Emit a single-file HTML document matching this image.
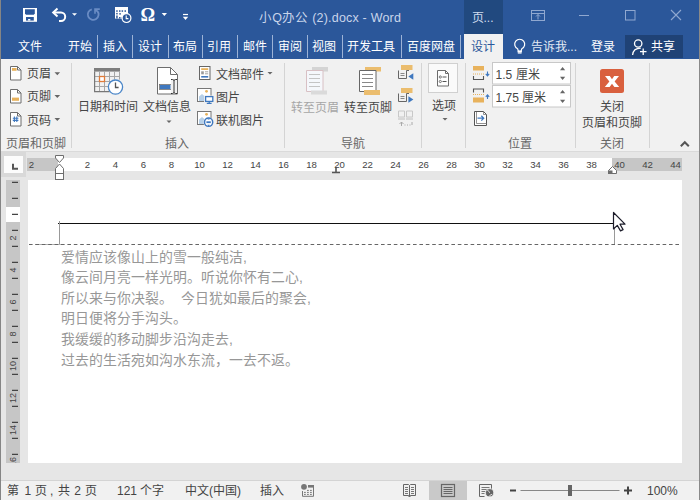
<!DOCTYPE html>
<html lang="zh-CN"><head><meta charset="utf-8">
<style>
*{margin:0;padding:0;box-sizing:border-box}
html,body{width:700px;height:500px;overflow:hidden;background:#e6e6e6}
body{position:relative;font-family:"Liberation Sans",sans-serif;color:#444}
.a{position:absolute}
.t{position:absolute;white-space:nowrap;line-height:1}
svg{position:absolute;overflow:visible}
#title{left:0;top:0;width:700px;height:59px;background:#2b579a}
.tab{position:absolute;top:40px;font-size:12px;color:#fff;line-height:14px;white-space:nowrap}
.sep{position:absolute;top:35px;width:1px;height:23px;background:#9db3d6}
#ribbon{left:0;top:59px;width:700px;height:93px;background:#f1f1f1;border-bottom:1px solid #dadada}
.rt{position:absolute;font-size:12px;color:#464646;line-height:14px;white-space:nowrap}
.gl{position:absolute;top:137px;font-size:12px;color:#666;line-height:14px;white-space:nowrap}
.gsep{position:absolute;top:63px;width:1px;height:84px;background:#dadada}
.rn{position:absolute;top:159.5px;font-size:9.6px;color:#444;line-height:10px;white-space:nowrap}
.doc{position:absolute;left:61px;font-size:13.9px;color:#979797;line-height:16px;white-space:nowrap}
.st{position:absolute;top:485px;font-size:12px;color:#444;line-height:13px;white-space:nowrap}
.vn{position:absolute;left:2.9px;width:20px;height:10px;text-align:center;font-size:9px;color:#444;line-height:10px;transform:rotate(-90deg);transform-origin:center}
</style></head><body>
<!-- left border -->
<div id="title" class="a"></div>

<!-- QAT icons -->
<svg style="left:0;top:0" width="700" height="34">
  <!-- save -->
  <rect x="23" y="8" width="14" height="13.8" fill="#fff"/>
  <path d="M25 9.3H34.8V13.6L33.8 14.7H26L25 13.6Z" fill="#2b579a"/>
  <rect x="26" y="17" width="7.8" height="3.6" fill="#2b579a"/>
  <rect x="28.1" y="19" width="2.2" height="1.6" fill="#fff"/>
  <!-- undo -->
  <path d="M54 12.5 h7 a4.2 4.2 0 0 1 0 8.4 h-2" fill="none" stroke="#fff" stroke-width="2"/>
  <path d="M57.5 8.5 l-4.3 4 4.3 4" fill="none" stroke="#fff" stroke-width="2"/>
  <path d="M72 13.3h5l-2.5 2.5z" fill="#fff"/>
  <!-- redo disabled -->
  <path d="M91.8 9.3A5.4 5.4 0 1 0 97.2 10.9" fill="none" stroke="#6a8cc4" stroke-width="1.8"/>
  <path d="M95 13.8V9.1H99.8M95.3 9.4l2.6 2.6" fill="none" stroke="#6a8cc4" stroke-width="1.6"/>
  <!-- date icon -->
  <rect x="115" y="7" width="13" height="11.6" fill="#fff"/>
  <rect x="116.2" y="10.3" width="1.5" height="1.5" fill="#2b579a"/><rect x="119.0" y="10.3" width="1.5" height="1.5" fill="#2b579a"/><rect x="121.6" y="10.3" width="1.5" height="1.5" fill="#2b579a"/><rect x="124.5" y="10.3" width="1.5" height="1.5" fill="#2b579a"/><rect x="116.2" y="12.9" width="1.5" height="1.5" fill="#2b579a"/><rect x="116.2" y="15.5" width="1.5" height="1.5" fill="#2b579a"/><rect x="119.3" y="13.1" width="1.5" height="1.5" fill="#2b579a"/><rect x="121.6" y="17.0" width="1.5" height="1.5" fill="#2b579a"/><rect x="119.0" y="17.0" width="1.5" height="1.5" fill="#2b579a"/><rect x="116.2" y="17.0" width="1.5" height="1.5" fill="#2b579a"/>
  <circle cx="126.5" cy="18.1" r="4.4" fill="#2b579a" stroke="#fff" stroke-width="1.2"/>
  <path d="M126.2 15.6v3h2.2" fill="none" stroke="#fff" stroke-width="1.1"/>
  <!-- omega -->
  <text x="140.6" y="20.8" font-family="Liberation Serif" font-size="18.5" font-weight="bold" fill="#fff" textLength="14.6" lengthAdjust="spacingAndGlyphs">Ω</text>
  <path d="M161.7 13h5.3l-2.65 3z" fill="#fff"/>
  <!-- customize -->
  <path d="M183 14.5h5" stroke="#fff" stroke-width="1.2"/>
  <path d="M182.8 16.8h5.4l-2.7 3.1z" fill="#fff"/>
  <!-- window controls -->
  <rect x="531.5" y="10.5" width="13" height="10" fill="none" stroke="#90a8d0" stroke-width="1"/>
  <path d="M531.5 13.5h13M538 19.5v-5M536 16.5l2 -2 2 2" fill="none" stroke="#90a8d0" stroke-width="1"/>
  <path d="M579 15.5h10" stroke="#90a8d0" stroke-width="1"/>
  <rect x="625.5" y="10.5" width="9.5" height="9.5" fill="none" stroke="#90a8d0" stroke-width="1"/>
  <path d="M671 10l10 10M681 10l-10 10" stroke="#90a8d0" stroke-width="1.1"/>
</svg>
<!-- contextual header -->
<div class="a" style="left:464px;top:0;width:39px;height:34px;background:#21497f"></div>
<div class="t" style="left:471.5px;top:11px;font-size:12px;color:#d0dcee;line-height:14px">页...</div>
<div class="t" style="left:259px;top:11.3px;font-size:12.5px;color:#c9d5ea;line-height:14px;letter-spacing:0.2px">小Q办公 (2).docx - Word</div>

<!-- tabs -->
<div class="tab" style="left:18px">文件</div>
<div class="tab" style="left:68px">开始</div>
<div class="sep" style="left:97px"></div>
<div class="tab" style="left:103px">插入</div>
<div class="sep" style="left:132px"></div>
<div class="tab" style="left:138px">设计</div>
<div class="sep" style="left:168px"></div>
<div class="tab" style="left:173px">布局</div>
<div class="sep" style="left:202px"></div>
<div class="tab" style="left:207px">引用</div>
<div class="sep" style="left:237px"></div>
<div class="tab" style="left:243px">邮件</div>
<div class="sep" style="left:272px"></div>
<div class="tab" style="left:278px">审阅</div>
<div class="sep" style="left:307px"></div>
<div class="tab" style="left:312px">视图</div>
<div class="sep" style="left:342px"></div>
<div class="tab" style="left:347px">开发工具</div>
<div class="sep" style="left:401px"></div>
<div class="tab" style="left:407px">百度网盘</div>
<div class="sep" style="left:460px"></div>
<div class="a" style="left:464px;top:34px;width:39px;height:26px;background:#f1f1f1"></div>
<div class="tab" style="left:471px;color:#2b579a">设计</div>
<svg style="left:0;top:34px" width="700" height="25">
  <path d="M517.6 14.8 A5 5 0 1 1 521.8 14.8 L521.2 16.6 V18 H518.2 V16.6z" fill="none" stroke="#fff" stroke-width="1.2" stroke-linejoin="round"/>
  <path d="M517.8 17.2h3.8" stroke="#fff" stroke-width="1.6"/>
  <path d="M517.8 19h3.8" stroke="#fff" stroke-width="1.2"/>
</svg>
<div class="tab" style="left:531px;color:#e4ebf5">告诉我...</div>
<div class="tab" style="left:591px">登录</div>
<div class="a" style="left:625px;top:35px;width:58px;height:23px;background:#1f4276"></div>
<svg style="left:0;top:34px" width="700" height="25">
  <circle cx="638.2" cy="9.5" r="3.7" fill="none" stroke="#fff" stroke-width="1.3"/>
  <path d="M632.6 21 C633 16.5 636.5 14.2 640.8 14.2" fill="none" stroke="#fff" stroke-width="1.3"/>
  <path d="M643.2 14.5v6.5M640 17.7h6.5" stroke="#fff" stroke-width="1.3"/>
</svg>
<div class="tab" style="left:651px">共享</div>

<!-- ribbon -->
<div id="ribbon" class="a"></div>
<!-- group 1 -->
<svg style="left:0;top:0" width="700" height="152">
  <defs>
    <path id="pg" d="M0.5 0.5h7l3.5 3.5v10h-10.5z" />
  </defs>
  <g transform="translate(10,66)"><use href="#pg" fill="#fff" stroke="#6d6d6d" stroke-width="1"/><path d="M7.5 0.5v3.5h3.5" fill="none" stroke="#6d6d6d"/><rect x="2" y="2" width="4.6" height="2.8" fill="#e8b25c"/></g>
  <g transform="translate(10,89)"><use href="#pg" fill="#fff" stroke="#6d6d6d" stroke-width="1"/><path d="M7.5 0.5v3.5h3.5" fill="none" stroke="#6d6d6d"/><rect x="2" y="8.6" width="7" height="3.2" fill="#e8b25c"/></g>
  <g transform="translate(10,112)"><use href="#pg" fill="#fff" stroke="#6d6d6d" stroke-width="1"/><path d="M7.5 0.5v3.5h3.5" fill="none" stroke="#6d6d6d"/><path d="M4.4 4.6v5.4M6.8 4.6v5.4M2.8 6.2h5.6M2.8 8.4h5.6" stroke="#3f78bf" stroke-width="1.1"/></g>
  <path d="M54.5 72.2h5.6l-2.8 3z M54.5 95h5.6l-2.8 3z M54.5 118h5.6l-2.8 3z" fill="#666"/>
  <!-- separators -->
  <path d="M71.5 63v85M284.5 63v85M421.5 63v85M465.5 63v85M575.5 63v85M649.5 63v85" stroke="#d4d4d4"/>
  <!-- calendar icon -->
  <rect x="94" y="68" width="26" height="3.6" fill="#7d7d7d"/>
  <path d="M99.5 71.6v20M104.5 71.6v20M109.5 71.6v20M114.5 71.6v8M119.5 71.6v8M94.5 76.5h25M94.5 81.5h25M94.5 86.5h15" fill="none" stroke="#a6a6a6" stroke-width="1"/>
  <path d="M94.6 71.6v20.1h15" fill="none" stroke="#777" stroke-width="1.2"/>
  <rect x="99.5" y="76.5" width="5" height="5" fill="#fff" stroke="#e07b39" stroke-width="1.3"/>
  <circle cx="115.5" cy="87.1" r="7.1" fill="#fff" stroke="#4a86c8" stroke-width="1.3"/>
  <path d="M115.5 82.4V87.5H118.6" fill="none" stroke="#555" stroke-width="1.3"/>
  <!-- doc info icon -->
  <g transform="translate(157,67)">
    <path d="M0.5 0.5h13l7 7v19.5h-20z" fill="#fff" stroke="#6d6d6d"/>
    <path d="M13.5 0.5v7h7" fill="none" stroke="#6d6d6d"/>
    <rect x="3" y="18" width="10.5" height="4" fill="#3f78bf"/>
    <rect x="2.5" y="17.5" width="14" height="5" fill="none" stroke="#6d6d6d" stroke-width="0.8"/>
    <rect x="14" y="12" width="6" height="15" fill="#f1f1f1"/>
    <path d="M14 12.5h1.5c1 0 1.5 .5 1.5 1.5v11c0 1-.5 1.5-1.5 1.5H14M20 12.5h-1.5c-1 0-1.5 .5-1.5 1.5M20 26.5h-1.5c-1 0-1.5-.5-1.5-1.5" fill="none" stroke="#333" stroke-width="1"/>
  </g>
  <path d="M166.5 120.5h5l-2.5 2.5z" fill="#666"/>
  <!-- 文档部件 icon -->
  <rect x="199.5" y="66.5" width="10.5" height="13" fill="#fff" stroke="#666" stroke-width="1"/>
  <rect x="201.2" y="68.2" width="7" height="1.8" fill="#e8b25c"/>
  <rect x="201.2" y="71.3" width="2.6" height="3" fill="#9a9a9a"/>
  <path d="M205 71.8h3.2M205 73.8h3.2" stroke="#9a9a9a" stroke-width="0.9"/>
  <rect x="201.2" y="76" width="7" height="1.6" fill="#3f78bf"/>
  <path d="M267.5 72h5l-2.5 2.5z" fill="#666"/>
  <!-- 图片 icon -->
  <rect x="197.5" y="88.5" width="13.5" height="13" fill="#fff" stroke="#777" stroke-width="1"/>
  <circle cx="206.5" cy="91.3" r="1.4" fill="#e8b25c"/>
  <path d="M199 101v-4.5l3-2.5 3 2.5v4.5z" fill="#b7d0e8"/>
  <rect x="204" y="95.5" width="10" height="8.5" fill="#f1f1f1"/>
  <rect x="205.6" y="96.6" width="7.2" height="4.8" fill="#fff" stroke="#3f78bf" stroke-width="1.3"/>
  <path d="M209.2 101.5v1.6M206.8 103.4h4.8" stroke="#3f78bf" stroke-width="1.2"/>
  <!-- 联机图片 icon -->
  <rect x="197.5" y="111.5" width="13.5" height="13" fill="#fff" stroke="#777" stroke-width="1"/>
  <circle cx="206.5" cy="114.3" r="1.4" fill="#e8b25c"/>
  <path d="M199 124v-4.5l3-2.5 3 2.5v4.5z" fill="#b7d0e8"/>
  <circle cx="208.6" cy="122.2" r="5.2" fill="#f1f1f1"/>
  <circle cx="208.6" cy="122.2" r="4.1" fill="#fff" stroke="#3f78bf" stroke-width="1.5"/>
  <rect x="206.4" y="121.3" width="4.4" height="1.8" fill="#3f78bf"/>
  <path d="M207.4 119.6h2.4l-1.2-1.4zM207.4 124.8h2.4l-1.2 1.4z" fill="#3f78bf"/>
  <!-- 转至页眉 (disabled) -->
  <rect x="312" y="67" width="16" height="4.5" fill="#d4d4d4"/>
  <path d="M306.5 70.5h16.5v21h-16.5z" fill="#f5f7fb" stroke="#d8c0c4" stroke-width="1"/>
  <path d="M309 74.5h11M309 78.5h11M309 82.5h11M309 86.5h11" stroke="#c4c4c4" stroke-width="1"/>
  <rect x="311" y="90.5" width="16" height="4" fill="#dadada"/>
  <!-- 转至页脚 -->
  <rect x="365" y="67" width="16" height="4.5" fill="#ebbd6e"/>
  <path d="M359.5 70.5h16.5v21h-16.5z" fill="#fff" stroke="#666" stroke-width="1"/>
  <path d="M362 74.5h11M362 78.5h11M362 82.5h11M362 86.5h11" stroke="#888" stroke-width="1"/>
  <rect x="364" y="90" width="16" height="5" fill="#ebbd6e"/>
  <!-- nav small icons -->
  <rect x="401" y="65" width="11.5" height="5" fill="#ebbd6e"/>
  <path d="M398.5 70.5v8h8v-8h2.5" fill="none" stroke="#666" stroke-width="1"/>
  <path d="M400.5 73.5h4M400.5 75.5h4" stroke="#888" stroke-width="1"/>
  <path d="M413.3 73.2v6.6l-5-3.3z" fill="#3f78bf"/>
  <rect x="401" y="88" width="11.5" height="5" fill="#ebbd6e"/>
  <path d="M398.5 93.5v8h8v-8h2.5" fill="none" stroke="#666" stroke-width="1"/>
  <path d="M400.5 96.5h4M400.5 98.5h4" stroke="#888" stroke-width="1"/>
  <path d="M408.4 96.2v6.6l5-3.3z" fill="#3f78bf"/>
  <g transform="translate(398,110.5)">
    <path d="M0.5 0.5h6v6h-6zM8.5 0.5h6v6h-6z" fill="none" stroke="#c8c8c8"/>
    <rect x="0" y="7" width="7" height="2.5" fill="#d8d8d8"/><rect x="8" y="7" width="7" height="2.5" fill="#d8d8d8"/>
    <path d="M3.5 15.5v-4M1.5 13.5l2-2 2 2M6.5 14.5h1M9 14.5h1M11.5 14.5h1M14 11.5v3" fill="none" stroke="#aaa"/>
  </g>
  <!-- options box -->
  <rect x="428.5" y="63.5" width="29" height="29" fill="#fafafa" stroke="#d0d0d0"/>
  <g transform="translate(437,70)">
    <path d="M0.5 0.5h8l3 3v12.5h-11z" fill="#fff" stroke="#6d6d6d"/>
    <path d="M8.5 0.5v3h3" fill="none" stroke="#6d6d6d"/>
    <circle cx="3.3" cy="7" r="1.1" fill="none" stroke="#555" stroke-width="0.8"/><path d="M5.5 7h4" stroke="#555"/>
    <circle cx="3.3" cy="11.5" r="1.1" fill="none" stroke="#555" stroke-width="0.8"/><path d="M5.5 11.5h4" stroke="#555"/>
  </g>
  <path d="M442.5 118h5l-2.5 2.5z" fill="#666"/>
  <!-- position icons -->
  <rect x="473" y="66" width="11" height="4.5" fill="#e8b25c"/>
  <path d="M473 74h11" stroke="#e8b25c" stroke-width="1" stroke-dasharray="1 1"/>
  <path d="M473.5 76v3.5h10v-3.5" fill="none" stroke="#555" stroke-width="1.1"/>
  <path d="M487.5 71.5v4M485.8 73.8l1.7 2 1.7-2" fill="none" stroke="#3f78bf" stroke-width="1.1"/>
  <path d="M473.5 92.5v-3.5h10v3.5" fill="none" stroke="#555" stroke-width="1.1"/>
  <path d="M473 94.5h11" stroke="#e8b25c" stroke-width="1" stroke-dasharray="1 1"/>
  <rect x="473" y="97.5" width="11" height="5" fill="#e8b25c"/>
  <path d="M487.5 99v-4.2M485.8 96.8l1.7-2 1.7 2" fill="none" stroke="#3f78bf" stroke-width="1.1"/>
  <path d="M474.5 111.5h9l3 3v11h-12z" fill="#fff" stroke="#555" stroke-width="1"/>
  <path d="M483.5 111.5v3h3M476.5 112v11.5h10" fill="none" stroke="#777" stroke-width="0.8"/>
  <path d="M477.5 118.2h6M481.3 115.8l2.4 2.4-2.4 2.4" fill="none" stroke="#3f78bf" stroke-width="1.3"/>
  <rect x="492.5" y="62.5" width="78" height="21.5" fill="#fff" stroke="#c8c8c8"/>
  <rect x="492.5" y="85.5" width="78" height="21.5" fill="#fff" stroke="#c8c8c8"/>
  <path d="M560 70.2h5.2l-2.6-3.2zM560 76.8h5.2l-2.6 3.2zM560 93.2h5.2l-2.6-3.2zM560 99.8h5.2l-2.6 3.2z" fill="#666"/>
  <!-- close -->
  <rect x="600" y="69" width="24" height="24" rx="2.5" fill="#d9603e"/>
  <path d="M605 76H609.8L612 79.3L614.2 76H619L614.6 81.5L619.2 87H614.4L612 83.7L609.6 87H604.8L609.4 81.5Z" fill="#fff"/>
  <!-- collapse -->
  <path d="M680.8 146.2l4-4 4 4" fill="none" stroke="#555" stroke-width="2"/>
</svg>
<div class="rt" style="left:27px;top:67px">页眉</div>
<div class="rt" style="left:27px;top:90px">页脚</div>
<div class="rt" style="left:27px;top:114px">页码</div>
<div class="gl" style="left:6px">页眉和页脚</div>
<div class="rt" style="left:78px;top:100px">日期和时间</div>
<div class="rt" style="left:143px;top:100px">文档信息</div>
<div class="rt" style="left:216px;top:68px">文档部件</div>
<div class="rt" style="left:216px;top:91px">图片</div>
<div class="rt" style="left:216px;top:114px">联机图片</div>
<div class="gl" style="left:165px">插入</div>
<div class="rt" style="left:291px;top:101px;color:#a6a6a6">转至页眉</div>
<div class="rt" style="left:344px;top:101px">转至页脚</div>
<div class="gl" style="left:341px">导航</div>
<div class="rt" style="left:432px;top:99px">选项</div>
<div class="rt" style="left:495.5px;top:68px;font-size:12px">1.5 厘米</div>
<div class="rt" style="left:495.5px;top:91px;font-size:12px">1.75 厘米</div>
<div class="gl" style="left:508px">位置</div>
<div class="rt" style="left:600px;top:100px">关闭</div>
<div class="rt" style="left:582px;top:116px">页眉和页脚</div>
<div class="gl" style="left:600px">关闭</div>


<!-- ruler band -->
<div class="a" style="left:1px;top:152px;width:699px;height:28px;background:#e6e6e6"></div>
<div class="a" style="left:1px;top:152px;width:25px;height:24.5px;background:#d9d9d9"></div>
<div class="a" style="left:4.2px;top:156.3px;width:19px;height:17.2px;background:#fcfcfc"></div>
<svg style="left:0;top:0" width="30" height="180"><path d="M13 163.8v5h5" fill="none" stroke="#555" stroke-width="2"/></svg>
<div class="a" style="left:27px;top:158px;width:31px;height:13px;background:#c6c6c6"></div>
<div class="a" style="left:58px;top:158px;width:554px;height:13px;background:#fff"></div>
<div class="a" style="left:612px;top:158px;width:70px;height:13px;background:#c6c6c6"></div>
<div class="rn" style="left:21.5px;width:20px;text-align:center">2</div>
<div class="rn" style="left:77.5px;width:20px;text-align:center">2</div>
<div class="rn" style="left:105.5px;width:20px;text-align:center">4</div>
<div class="rn" style="left:133.5px;width:20px;text-align:center">6</div>
<div class="rn" style="left:161.5px;width:20px;text-align:center">8</div>
<div class="rn" style="left:189.5px;width:20px;text-align:center">10</div>
<div class="rn" style="left:217.5px;width:20px;text-align:center">12</div>
<div class="rn" style="left:245.5px;width:20px;text-align:center">14</div>
<div class="rn" style="left:273.5px;width:20px;text-align:center">16</div>
<div class="rn" style="left:301.5px;width:20px;text-align:center">18</div>
<div class="rn" style="left:329.5px;width:20px;text-align:center">20</div>
<div class="rn" style="left:357.5px;width:20px;text-align:center">22</div>
<div class="rn" style="left:385.5px;width:20px;text-align:center">24</div>
<div class="rn" style="left:413.5px;width:20px;text-align:center">26</div>
<div class="rn" style="left:441.5px;width:20px;text-align:center">28</div>
<div class="rn" style="left:469.5px;width:20px;text-align:center">30</div>
<div class="rn" style="left:497.5px;width:20px;text-align:center">32</div>
<div class="rn" style="left:525.5px;width:20px;text-align:center">34</div>
<div class="rn" style="left:553.5px;width:20px;text-align:center">36</div>
<div class="rn" style="left:581.5px;width:20px;text-align:center">38</div>
<div class="rn" style="left:609.5px;width:20px;text-align:center">40</div>
<div class="rn" style="left:637.5px;width:20px;text-align:center">42</div>
<div class="rn" style="left:665.5px;width:20px;text-align:center">44</div>
<svg style="left:0;top:0" width="700" height="182">
  <path d="M55.5 155.5h8v2.5l-4 4.5-4-4.5z" fill="#fff" stroke="#6d6d6d"/>
  <path d="M59.5 164l4 4.5v5h-8v-5z" fill="#fff" stroke="#6d6d6d"/>
  <rect x="55.5" y="173.5" width="8" height="6" fill="#fff" stroke="#6d6d6d"/>
  <path d="M336 167v5M332 172.5h8" stroke="#555" stroke-width="1.6"/>
  <path d="M608.5 173.5v-3l4-4 4 4v3z" fill="#fff" stroke="#6d6d6d"/>
  <rect x="608" y="170.5" width="4.5" height="3.5" fill="#6d6d6d"/>
</svg>

<!-- page -->
<div class="a" style="left:28px;top:180px;width:654px;height:283px;background:#fff"></div>
<!-- vertical ruler -->
<div class="a" style="left:6px;top:180px;width:14px;height:27px;background:#c6c6c6"></div>
<div class="a" style="left:6px;top:207px;width:14px;height:15px;background:#fff"></div>
<div class="a" style="left:6px;top:222px;width:14px;height:241px;background:#c6c6c6"></div>
<div class="a" style="left:0;top:180px;width:28px;height:283px;overflow:hidden"><div class="a" style="left:0;top:-180px;width:28px;height:500px"><svg style="left:0;top:0" width="30" height="470"><path d="M12 182.4h6M12 198.4h6M12 214.4h6M12 230.4h6M12 246.4h6M12 262.4h6M12 278.4h6M12 294.4h6M12 310.4h6M12 326.4h6M12 342.4h6M12 358.4h6M12 374.4h6M12 390.4h6M12 406.4h6M12 422.4h6M12 438.4h6M12 454.4h6" stroke="#444" stroke-width="1.2"/></svg>
<div class="vn" style="top:233.4px">2</div>
<div class="vn" style="top:265.4px">4</div>
<div class="vn" style="top:297.4px">6</div>
<div class="vn" style="top:329.4px">8</div>
<div class="vn" style="top:361.4px">10</div>
<div class="vn" style="top:393.4px">12</div>
<div class="vn" style="top:425.4px">14</div>
<div class="vn" style="top:457.4px">16</div>

</div></div>
<!-- header border & text -->
<svg style="left:0;top:0" width="700" height="470">
  <path d="M58 223.5h556" stroke="#111" stroke-width="1.2"/>
  <path d="M59.5 221v23M614.5 221v23" stroke="#999" stroke-width="1"/>
  <path d="M35 244.5h27" stroke="#b0b0b0" stroke-width="1"/>
  <path d="M29 244.5h652" stroke="#666" stroke-width="1.1" stroke-dasharray="3.6 2.8"/>
  <!-- cursor -->
  <path d="M613.5 212.5v16.5l3.8-3.6 3.2 5.5 2.6-1.3-3.1-5.4h5z" fill="#fff" stroke="#1c1c2a" stroke-width="1.2" stroke-linejoin="round"/>
</svg>
<div class="doc" style="top:248.5px">爱情应该像山上的雪一般纯洁,</div>
<div class="doc" style="top:269.2px">像云间月亮一样光明。听说你怀有二心,</div>
<div class="doc" style="top:289.7px">所以来与你决裂。<span style="display:inline-block;width:8px"></span>今日犹如最后的聚会,</div>
<div class="doc" style="top:310.2px">明日便将分手沟头。</div>
<div class="doc" style="top:331px">我缓缓的移动脚步沿沟走去,</div>
<div class="doc" style="top:351.8px">过去的生活宛如沟水东流，一去不返。</div>


<!-- status bar -->
<div class="a" style="left:1px;top:480px;width:699px;height:20px;background:#f1f1f1;border-top:1px solid #d4d4d4"></div>
<div class="st" style="left:7.3px">第</div><div class="st" style="left:24.6px">1</div><div class="st" style="left:34.8px">页</div><div class="st" style="left:50px">,</div><div class="st" style="left:58.4px">共</div><div class="st" style="left:74.3px">2</div><div class="st" style="left:85.1px">页</div>
<div class="st" style="left:117px">121 个字</div>
<div class="st" style="left:185px">中文(中国)</div>
<div class="st" style="left:260px">插入</div>
<div class="a" style="left:429px;top:481px;width:38px;height:19px;background:#c9c9c9"></div>
<svg style="left:0;top:0" width="700" height="500">
  <!-- macro icon -->
  <circle cx="304" cy="486.8" r="2.9" fill="#777"/>
  <rect x="308" y="485" width="6" height="2.6" fill="#777"/>
  <path d="M302.5 491v5.3h11v-10.5" fill="none" stroke="#777" stroke-width="1"/>
  <path d="M307 490.4h1.8M310 490.4h1.8M304 492.4h1.8M307 492.4h1.8M310 492.4h1.8M304 494.4h1.8M307 494.4h1.8M310 494.4h1.8" stroke="#777" stroke-width="1"/>
  <!-- read mode -->
  <path d="M403.5 484.5h5l1 1 1-1h5v11h-5l-1 1-1-1h-5z" fill="none" stroke="#666" stroke-width="1"/>
  <path d="M409.5 485.5v10.5" stroke="#666" stroke-width="1"/>
  <path d="M405 487.5h3M405 489.5h3M405 491.5h3M405 493.5h3M411 487.5h3M411 489.5h3M411 491.5h3M411 493.5h3" stroke="#777" stroke-width="1"/>
  <path d="M408 495.5l1.5 1.5 1.5-1.5" fill="none" stroke="#666" stroke-width="1"/>
  <!-- print layout -->
  <rect x="441.5" y="484.5" width="13" height="12" fill="none" stroke="#666" stroke-width="1.2"/>
  <path d="M443.5 487.5h9M443.5 489.5h9M443.5 491.5h9M443.5 493.5h9" stroke="#666" stroke-width="1"/>
  <!-- web layout -->
  <path d="M479.5 496.5v-12h12v5" fill="none" stroke="#666" stroke-width="1"/>
  <path d="M479.5 496.5h5" stroke="#666" stroke-width="1"/>
  <path d="M481.5 487.5h8M481.5 489.5h6M481.5 491.5h4M481.5 493.5h3" stroke="#777" stroke-width="1"/>
  <circle cx="489.6" cy="492.8" r="4.1" fill="#666" stroke="#f1f1f1" stroke-width="0.8"/>
  <path d="M487.2 490.2c1.5.6 2.2 1.6 2.4 2.6M489.6 496.6c0-1.3.8-2 2.6-2.2" fill="none" stroke="#f1f1f1" stroke-width="0.9"/>
  <path d="M510 490.5h6" stroke="#444" stroke-width="2"/>
  <path d="M520.5 490.5h99" stroke="#888" stroke-width="1"/>
  <rect x="568" y="485" width="4" height="11" fill="#666"/>
  <path d="M624 490.5h8M628 486.5v8" stroke="#444" stroke-width="2"/>
</svg>
<div class="st" style="left:647px;top:485px">100%</div>

<div class="a" style="left:0;top:0;width:1px;height:500px;background:#858585"></div>
<div class="a" style="left:699px;top:0;width:1px;height:500px;background:#8a8a8a"></div>
</body></html>
